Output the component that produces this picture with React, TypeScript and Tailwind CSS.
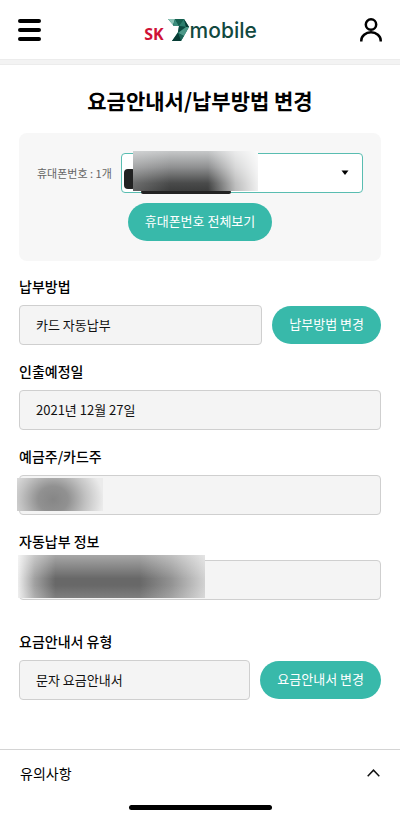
import React, { useState } from 'react'

interface FieldProps {
  id: string
  label: string
  value?: string
  action?: string
  children?: React.ReactNode
}

const Logo: React.FC = () => (
  <a href="#home" aria-label="SK 7mobile" className="flex items-end h-6">
    <span className="font-['Noto_Sans'] text-base leading-4 font-bold text-[#cf1236]">SK</span>
    <svg width="22" height="22" viewBox="0 0 22 22" className="ml-1 mb-px" aria-hidden="true">
      <path d="M0 0H16L21 8L13 22H4L10 13L11 7L6 7Z" fill="#0d5a4c" />
      <path d="M0 0H7L5 6Z" fill="#8cc4b7" />
      <path d="M7 0L11 7H5Z" fill="#3b8c7c" />
      <path d="M7 0H16L11 7Z" fill="#15604f" />
      <path d="M16 0L18 8L11 7Z" fill="#2b7d6d" />
      <path d="M16 0L21 8H18Z" fill="#083c35" />
      <path d="M11 7L18 8L10 14Z" fill="#0b4a40" />
      <path d="M18 8H21L16 17L10 14Z" fill="#4c9888" />
      <path d="M10 14L16 17L13 22Z" fill="#1b6557" />
      <path d="M10 14L13 22H4Z" fill="#083c35" />
    </svg>
    <span className="font-['Inter'] text-[21px] leading-[22px] font-medium text-[#12493f]">mobile</span>
  </a>
)

const PillButton: React.FC<{ children: React.ReactNode }> = ({ children }) => (
  <button
    type="button"
    className="h-[38px] shrink-0 px-[17px] pb-0.5 rounded-full bg-[#38b9aa] text-[13px] text-white whitespace-nowrap"
  >
    {children}
  </button>
)

const Field: React.FC<FieldProps> = ({ id, label, value = '', action, children }) => (
  <div>
    <label htmlFor={id} className="block text-sm leading-5 font-medium text-black">
      {label}
    </label>
    <div className="relative mt-[9px] flex items-center gap-2.5">
      <input
        id={id}
        readOnly
        value={value}
        className="h-10 min-w-0 flex-1 px-4 pb-0.5 rounded-sm border border-[#cfcfcf] bg-[#f4f4f4] text-[13px] text-[#111] outline-none"
      />
      {action && <PillButton>{action}</PillButton>}
      {children}
    </div>
  </div>
)

export default function App() {
  const [open, setOpen] = useState(true)

  return (
    <div className="min-h-screen bg-white font-['Noto_Sans_CJK_KR',sans-serif] text-black">
      <header className="h-[59px] px-[18px] flex items-center justify-between">
        <button type="button" aria-label="메뉴" className="flex flex-col gap-[5px]">
          <span className="block w-[23px] h-1 rounded-full bg-black" />
          <span className="block w-[23px] h-1 rounded-full bg-black" />
          <span className="block w-[23px] h-1 rounded-full bg-black" />
        </button>
        <Logo />
        <button type="button" aria-label="마이페이지">
          <svg width="22" height="24" viewBox="0 0 22 24" fill="none" stroke="#000" strokeWidth="2.5">
            <circle cx="11" cy="6.5" r="5.2" />
            <path d="M1.3 23.5v-1a9.7 8.2 0 0 1 19.4 0v1" />
          </svg>
        </button>
      </header>
      <div className="h-1.5 bg-[#f3f3f3] border-y border-[#ececec]" />

      <main>
        <h1 className="pt-5 pb-px text-center text-[21px] leading-[30px] font-bold">요금안내서/납부방법 변경</h1>

        <section className="mx-[19px] mt-[17px] h-32 pt-5 px-[18px] rounded-lg bg-[#f7f7f7]">
          <div className="flex items-center gap-[9px]">
            <label htmlFor="phone" className="text-[11px] text-[#666] whitespace-nowrap">
              휴대폰번호 : 1개
            </label>
            <div className="relative flex-1">
              <select
                id="phone"
                className="block w-full h-10 px-4 appearance-none rounded-sm border border-[#59bdb1] bg-white text-[13px] outline-none"
              >
                <option value=""></option>
              </select>
              <svg width="8" height="5" viewBox="0 0 8 5" className="absolute right-3.5 top-[17px] pointer-events-none">
                <path d="M0.5 0.5h7L4 5z" fill="#000" />
              </svg>
              <span className="absolute left-[3px] top-4 w-3 h-5 rounded-sm bg-[#222]" />
              <span className="absolute left-5 -bottom-px w-[90px] h-1 rounded-full bg-[#222]" />
              <span className="absolute left-3 -top-0.5 w-[125px] h-10 bg-[linear-gradient(to_right,rgba(255,255,255,0.2),transparent_30%,transparent_60%,rgba(255,255,255,0.65)_82%,rgba(255,255,255,0.92)),linear-gradient(to_bottom,#c6c8c9,#909192_40%,#4a4b4b_80%,#3c3d3d)]" />
            </div>
          </div>
          <div className="mt-2.5 flex justify-center">
            <PillButton>휴대폰번호 전체보기</PillButton>
          </div>
        </section>

        <section className="px-[19px] pt-[15px] flex flex-col gap-4">
          <Field id="method" label="납부방법" value="카드 자동납부" action="납부방법 변경" />
          <Field id="date" label="인출예정일" value="2021년 12월 27일" />
          <Field id="owner" label="예금주/카드주">
            <span className="absolute -left-0.5 top-[3px] w-[86px] h-[33px] bg-[radial-gradient(50px_44px_at_42%_65%,#868686,#919191_30%,#c2c2c2_65%,#ebebeb)]" />
          </Field>
          <Field id="auto" label="자동납부 정보">
            <span className="absolute -left-px -top-[5px] w-[187px] h-[43px] bg-[linear-gradient(to_bottom,rgba(255,255,255,0.42),transparent_55%,transparent_70%,rgba(255,255,255,0.15)),linear-gradient(to_right,#ededed,#a0a0a0_9%,#686868_20%,#686868_65%,#939393_82%,#d2d2d2)]" />
          </Field>
        </section>

        <section className="px-[19px] pt-[31px]">
          <Field id="bill" label="요금안내서 유형" value="문자 요금안내서" action="요금안내서 변경" />
        </section>
      </main>

      <footer className="mt-[49px] border-t border-[#d4d4d4]">
        <button
          type="button"
          aria-expanded={open}
          onClick={() => setOpen(!open)}
          className="w-full h-[46px] px-5 flex items-center justify-between text-sm"
        >
          유의사항
          <svg width="13" height="8" viewBox="0 0 13 8" fill="none" stroke="#111" strokeWidth="1.5">
            <path d="M0.7 7.2L6.5 1.2L12.3 7.2" />
          </svg>
        </button>
        <div className="mx-auto mt-[9px] w-[143px] h-[5px] rounded-full bg-black" />
      </footer>
    </div>
  )
}
